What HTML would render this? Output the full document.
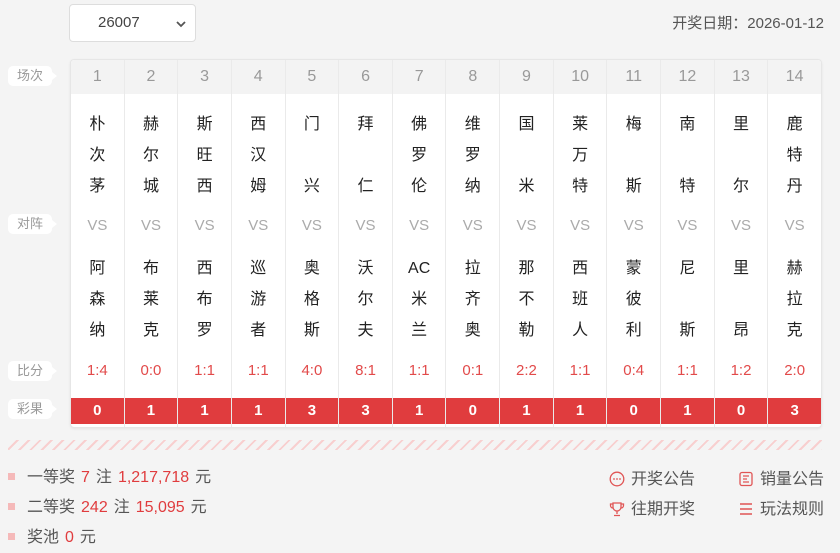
<!DOCTYPE html>
<html><head><meta charset="utf-8"><style>
*{margin:0;padding:0;box-sizing:border-box}
body{width:840px;height:543px;overflow:hidden;background:#f4f4f4;font-family:"Liberation Sans","Noto Sans CJK SC",sans-serif;position:relative}
.sel{position:absolute;left:69px;top:4px;width:127px;height:38px;background:#fff;border:1px solid #ddd;border-radius:4px;font-size:15px;color:#444;line-height:36px;padding-left:28px}
.sel svg{position:absolute;right:8px;top:15px}
.date{position:absolute;right:16px;top:12px;font-size:15px;color:#555}
.lbl{position:absolute;left:8px;width:44px;height:20px;background:#fff;border-radius:5px;font-size:13px;color:#999;text-align:center;line-height:20px}
.lbl:after{content:"";position:absolute;right:-5px;top:6px;border-left:5px solid #fff;border-top:4px solid transparent;border-bottom:4px solid transparent}
.tbl{position:absolute;left:70px;top:59px;width:752px;height:369px;background:#fff;border:1px solid #e6e6e6;border-radius:4px;display:flex;overflow:hidden;box-shadow:0 1px 2px #e4e4e4}
.col{flex:1;border-left:1px solid #eaeaea;position:relative;text-align:center}
.col:first-child{border-left:none}
.h{height:34px;background:#f3f3f3;color:#999;font-size:16px;line-height:34px}
.nm{position:absolute;left:0;right:0;height:93px;display:flex;flex-direction:column;justify-content:space-between;font-size:16px;color:#222;line-height:31px}
.vs{position:absolute;left:0;right:0;top:151px;line-height:30px;color:#aaa;font-size:15px}
.sc{position:absolute;left:0;right:0;top:296px;line-height:30px;color:#e24a4a;font-size:15px}
.rs{position:absolute;left:0;right:0;top:338px;height:26px;background:#e03c3e;color:#fff;font-weight:bold;font-size:15px;line-height:26px}
.dash{position:absolute;left:8px;top:440px;width:814px;height:10px;background:repeating-linear-gradient(135deg,transparent 0 6px,#f8cfcf 6px 8px)}
.pz{position:absolute;left:8px;font-size:16px;color:#555;line-height:30px}
.pz i{display:inline-block;width:7px;height:7px;background:#f5b9b9;margin-right:12px;vertical-align:2px}
.pz b{font-weight:normal;color:#e03c3e;margin:0 6px}
.lk{position:absolute;font-size:16px;color:#555;line-height:30px}
.lk svg{vertical-align:-3px;margin-right:6px}
</style></head><body>
<div class="sel">26007<svg width="12" height="8" viewBox="0 0 12 8"><path d="M2 2l4 4 4-4" stroke="#555" stroke-width="1.8" fill="none"/></svg></div>
<div class="date">开奖日期：2026-01-12</div>
<div class="lbl" style="top:66px">场次</div>
<div class="lbl" style="top:214px">对阵</div>
<div class="lbl" style="top:361px">比分</div>
<div class="lbl" style="top:399px">彩果</div>
<div class="tbl">
<div class="col"><div class="h">1</div><div class="nm" style="top:49px"><span>朴</span><span>次</span><span>茅</span></div><div class="vs">VS</div><div class="nm" style="top:193px"><span>阿</span><span>森</span><span>纳</span></div><div class="sc">1:4</div><div class="rs">0</div></div>
<div class="col"><div class="h">2</div><div class="nm" style="top:49px"><span>赫</span><span>尔</span><span>城</span></div><div class="vs">VS</div><div class="nm" style="top:193px"><span>布</span><span>莱</span><span>克</span></div><div class="sc">0:0</div><div class="rs">1</div></div>
<div class="col"><div class="h">3</div><div class="nm" style="top:49px"><span>斯</span><span>旺</span><span>西</span></div><div class="vs">VS</div><div class="nm" style="top:193px"><span>西</span><span>布</span><span>罗</span></div><div class="sc">1:1</div><div class="rs">1</div></div>
<div class="col"><div class="h">4</div><div class="nm" style="top:49px"><span>西</span><span>汉</span><span>姆</span></div><div class="vs">VS</div><div class="nm" style="top:193px"><span>巡</span><span>游</span><span>者</span></div><div class="sc">1:1</div><div class="rs">1</div></div>
<div class="col"><div class="h">5</div><div class="nm" style="top:49px"><span>门</span><span>兴</span></div><div class="vs">VS</div><div class="nm" style="top:193px"><span>奥</span><span>格</span><span>斯</span></div><div class="sc">4:0</div><div class="rs">3</div></div>
<div class="col"><div class="h">6</div><div class="nm" style="top:49px"><span>拜</span><span>仁</span></div><div class="vs">VS</div><div class="nm" style="top:193px"><span>沃</span><span>尔</span><span>夫</span></div><div class="sc">8:1</div><div class="rs">3</div></div>
<div class="col"><div class="h">7</div><div class="nm" style="top:49px"><span>佛</span><span>罗</span><span>伦</span></div><div class="vs">VS</div><div class="nm" style="top:193px"><span>AC</span><span>米</span><span>兰</span></div><div class="sc">1:1</div><div class="rs">1</div></div>
<div class="col"><div class="h">8</div><div class="nm" style="top:49px"><span>维</span><span>罗</span><span>纳</span></div><div class="vs">VS</div><div class="nm" style="top:193px"><span>拉</span><span>齐</span><span>奥</span></div><div class="sc">0:1</div><div class="rs">0</div></div>
<div class="col"><div class="h">9</div><div class="nm" style="top:49px"><span>国</span><span>米</span></div><div class="vs">VS</div><div class="nm" style="top:193px"><span>那</span><span>不</span><span>勒</span></div><div class="sc">2:2</div><div class="rs">1</div></div>
<div class="col"><div class="h">10</div><div class="nm" style="top:49px"><span>莱</span><span>万</span><span>特</span></div><div class="vs">VS</div><div class="nm" style="top:193px"><span>西</span><span>班</span><span>人</span></div><div class="sc">1:1</div><div class="rs">1</div></div>
<div class="col"><div class="h">11</div><div class="nm" style="top:49px"><span>梅</span><span>斯</span></div><div class="vs">VS</div><div class="nm" style="top:193px"><span>蒙</span><span>彼</span><span>利</span></div><div class="sc">0:4</div><div class="rs">0</div></div>
<div class="col"><div class="h">12</div><div class="nm" style="top:49px"><span>南</span><span>特</span></div><div class="vs">VS</div><div class="nm" style="top:193px"><span>尼</span><span>斯</span></div><div class="sc">1:1</div><div class="rs">1</div></div>
<div class="col"><div class="h">13</div><div class="nm" style="top:49px"><span>里</span><span>尔</span></div><div class="vs">VS</div><div class="nm" style="top:193px"><span>里</span><span>昂</span></div><div class="sc">1:2</div><div class="rs">0</div></div>
<div class="col"><div class="h">14</div><div class="nm" style="top:49px"><span>鹿</span><span>特</span><span>丹</span></div><div class="vs">VS</div><div class="nm" style="top:193px"><span>赫</span><span>拉</span><span>克</span></div><div class="sc">2:0</div><div class="rs">3</div></div>
</div>
<div class="dash"></div>
<div class="pz" style="top:463px"><i></i>一等奖<b>7</b>注<b>1,217,718</b>元</div>
<div class="pz" style="top:493px"><i></i>二等奖<b>242</b>注<b>15,095</b>元</div>
<div class="pz" style="top:523px"><i></i>奖池<b>0</b>元</div>
<div class="lk" style="left:609px;top:465px"><svg width="16" height="16" viewBox="0 0 16 16"><circle cx="8" cy="8" r="6.8" stroke="#e05555" stroke-width="1.3" fill="none"/><circle cx="5" cy="8" r=".9" fill="#e05555"/><circle cx="8" cy="8" r=".9" fill="#e05555"/><circle cx="11" cy="8" r=".9" fill="#e05555"/></svg>开奖公告</div>
<div class="lk" style="left:738px;top:465px"><svg width="16" height="16" viewBox="0 0 16 16"><rect x="2" y="1.5" width="12" height="13" rx="2" stroke="#e05555" stroke-width="1.3" fill="none"/><path d="M5 5h6M5 8h4M5 11h6" stroke="#e05555" stroke-width="1.3"/></svg>销量公告</div>
<div class="lk" style="left:609px;top:495px"><svg width="16" height="16" viewBox="0 0 16 16"><path d="M4 2h8v4a4 4 0 0 1-8 0zM4 3H1.5v1.5A2.5 2.5 0 0 0 4 7M12 3h2.5v1.5A2.5 2.5 0 0 1 12 7M8 10v3M5 14.5h6" stroke="#e05555" stroke-width="1.3" fill="none"/></svg>往期开奖</div>
<div class="lk" style="left:738px;top:495px"><svg width="16" height="16" viewBox="0 0 16 16"><path d="M2 3h12M2 8h12M2 13h12" stroke="#e05555" stroke-width="1.5"/></svg>玩法规则</div>
</body></html>
